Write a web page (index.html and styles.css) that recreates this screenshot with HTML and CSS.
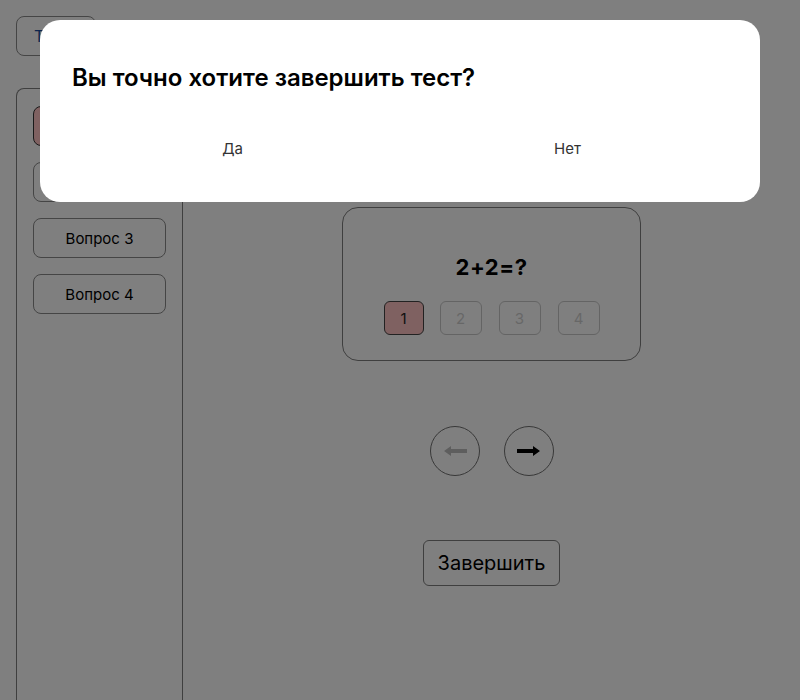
FILE: index.html
```html
<!DOCTYPE html>
<html lang="ru">
<head>
<meta charset="utf-8">
<title>Тест</title>
<link rel="stylesheet" href="styles.css">
</head>
<body>
<div class="page">
  <header class="top">
    <button class="back-btn">Тесты</button>
  </header>
  <div class="layout">
    <aside class="sidebar">
      <button class="q-btn q-btn--active">Вопрос 1</button>
      <button class="q-btn">Вопрос 2</button>
      <button class="q-btn">Вопрос 3</button>
      <button class="q-btn">Вопрос 4</button>
    </aside>
    <main class="main">
      <section class="card">
        <div class="question">2+2=?</div>
        <div class="answers">
          <button class="ans ans--active">1</button>
          <button class="ans">2</button>
          <button class="ans">3</button>
          <button class="ans">4</button>
        </div>
      </section>
      <div class="nav">
        <button class="circle circle--disabled">
          <svg width="26" height="14" viewBox="0 0 26 14"><path d="M25 5H9V2L2 7l7 5V9h16z" fill="#bdbdbd"/></svg>
        </button>
        <button class="circle">
          <svg width="26" height="14" viewBox="0 0 26 14"><path d="M1 5h16V2l7 5-7 5V9H1z" fill="#000"/></svg>
        </button>
      </div>
      <button class="finish">Завершить</button>
    </main>
  </div>
</div>
<div class="overlay"></div>
<div class="modal">
  <h2 class="modal-title">Вы точно хотите завершить тест?</h2>
  <div class="modal-actions">
    <button class="modal-btn">Да</button>
    <button class="modal-btn">Нет</button>
  </div>
</div>
</body>
</html>
```
FILE: styles.css
```css
* { box-sizing: border-box; }
html, body { margin: 0; height: 100%; }
body {
  font-family: Inter, "Noto Sans", sans-serif;
  background: #fff;
  color: #000;
  overflow: hidden;
}
button { font-family: inherit; cursor: pointer; }

.page { padding: 16px 0 0 16px; }
.top { height: 72px; }
.back-btn {
  width: 80px; height: 40px;
  border: 1px solid #8a8a8a; border-radius: 8px;
  background: #fff; color: #1a4a9a;
  font-size: 16px; text-align: left; padding-left: 17px;
}
.layout { display: flex; height: 612px; }
.sidebar {
  width: 167px; flex: none;
  border: 1px solid #7e7e7e; border-bottom: none; border-radius: 8px 0 0 0;
  padding: 17px 16px;
  display: flex; flex-direction: column; gap: 16px;
}
.q-btn {
  height: 40px; width: 133px;
  border: 1px solid #8a8a8a; border-radius: 8px;
  background: #fff; color: #000;
  font-size: 15px;
}
.q-btn--active { background: #ffc2c2; border-color: #333; }

.main {
  flex: 1;
  display: flex; flex-direction: column; align-items: center;
  padding-top: 119px;
}
.card {
  width: 299px; height: 154px;
  border: 1px solid #7e7e7e; border-radius: 16px;
  display: flex; flex-direction: column; align-items: center;
  padding-top: 44px;
}
.question { font-size: 22px; font-weight: 700; line-height: 30px; letter-spacing: 0.5px; }
.answers { display: flex; gap: 17px; margin-top: 19px; }
.ans {
  width: 42px; height: 34px;
  border: 1px solid #c8c8c8; border-radius: 6px;
  background: #fff; color: #cfcfcf;
  font-size: 15px; padding: 0;
}
.ans--active { width: 40px; margin-right: -1px; background: #ffc2c2; border-color: #444; color: #222; }

.nav { display: flex; gap: 24px; margin-top: 65px; }
.circle {
  width: 50px; height: 50px; border-radius: 50%;
  border: 1px solid #707070; background: #fff;
  display: flex; align-items: center; justify-content: center; padding: 0;
}
.finish {
  margin-top: 64px;
  width: 137px; height: 46px;
  border: 1px solid #7e7e7e; border-radius: 6px;
  background: #fff; color: #000;
  font-size: 20px;
}

.overlay { position: fixed; inset: 0; background: rgba(0,0,0,0.5); }
.modal {
  position: fixed; left: 40px; top: 20px;
  width: 720px; height: 182px;
  background: #fff; border-radius: 20px;
  padding: 44px 32px 0;
}
.modal-title { margin: 0; font-size: 24px; font-weight: 600; line-height: 28px; }
.modal-actions { display: flex; gap: 14px; margin-top: 38px; }
.modal-btn {
  flex: 1; height: 36px;
  border: none; background: transparent;
  font-size: 15px; color: #333;
}
```
